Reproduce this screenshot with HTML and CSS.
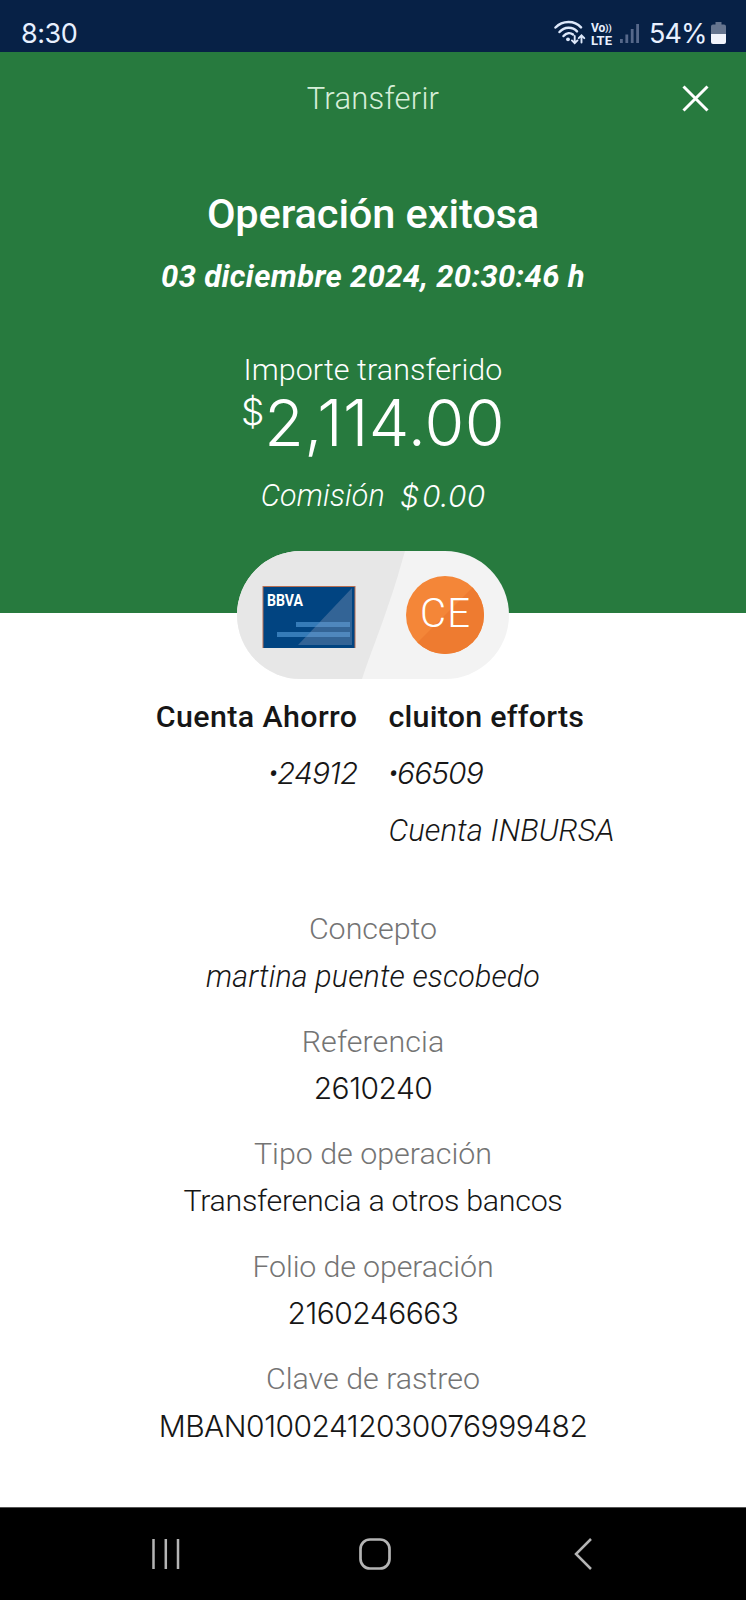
FILE: index.html
```html
<!DOCTYPE html>
<html lang="es">
<head>
<meta charset="utf-8">
<title>Transferir</title>
<link rel="stylesheet" href="styles.css">
</head>
<body>
<div class="screen">
  <div class="status">
    <span class="time">8:30</span>
    <div class="indicators">
      <svg class="wifi" width="32" height="26" viewBox="0 0 32 26" fill="none" stroke="#dde8fa" stroke-linecap="round">
        <path d="M1.500 7.500C8.500 .2 20.500 .2 27 7.300" stroke-width="2.500"/>
        <path d="M5.500 12C10.500 6.500 18.500 6.500 23 11.300" stroke-width="2.500"/>
        <path d="M9.500 16C12.500 12.600 16.500 12.600 19 14.500" stroke-width="2.500"/>
        <circle cx="14" cy="19.300" r="1.900" fill="#dde8fa" stroke="none"/>
        <path d="M20.700 16v7M17.900 20.400l2.800 2.800 2.800-2.800M27.500 22.500v-7M24.700 18.200l2.800-2.800 2.800 2.800" stroke-width="1.900"/>
      </svg>
      <span class="volte"><span class="vo">Vo<i>))</i></span><span class="lte">LTE</span></span>
      <svg class="signal" width="20" height="22" viewBox="0 0 20 22" fill="#56688a">
        <rect x="0" y="16" width="2.800" height="4"/><rect x="5.400" y="11.500" width="2.800" height="8.500"/><rect x="10.800" y="6" width="2.800" height="14"/><rect x="16.200" y="1" width="2.800" height="19"/>
      </svg>
      <span class="percent">54%</span>
      <svg class="battery" width="15" height="23" viewBox="0 0 15 23">
        <path d="M4.500 0h6v2.500H13q2 0 2 2V12H0V4.500q0-2 2-2h2.500z" fill="#66758f"/>
        <path d="M0 12h15v8q0 2-2 2H2q-2 0-2-2z" fill="#f1f4fc"/>
      </svg>
    </div>
  </div>

  <header class="hero">
    <div class="topbar">
      <h1 class="heading">Transferir</h1>
      <svg class="close" width="27" height="27" viewBox="0 0 27 27" fill="none" stroke="#fff" stroke-width="3"><path d="M1.500 1.500l24 24M25.500 1.500l-24 24"/></svg>
    </div>
    <h2 class="result">Operación exitosa</h2>
    <p class="date">03 diciembre 2024, 20:30:46 h</p>
    <p class="caption">Importe transferido</p>
    <p class="amount"><span class="currency">$</span><span>2,114.00</span></p>
    <p class="fee"><span>Comisión</span><span class="fee-value"><span class="fee-sign">$</span>0.00</span></p>
  </header>

  <div class="parties">
    <svg width="272" height="128" viewBox="0 0 272 128">
      <defs><clipPath id="pill"><rect width="272" height="128" rx="64"/></clipPath><clipPath id="disc"><circle cx="208" cy="64" r="39"/></clipPath></defs>
      <g clip-path="url(#pill)">
        <rect width="272" height="128" fill="#f3f3f3"/>
        <path d="M0 0H168C160 28 157 38 150 58C142 82 134 101 125 128H0z" fill="#e7e7e7"/>
      </g>
      <rect x="25.500" y="35" width="93" height="62" fill="#b86f52"/>
      <rect x="26.500" y="36" width="91" height="61" fill="#014481"/>
      <path d="M115 37V94H61z" fill="#336496"/>
      <path d="M59 71h54v5H59zM40 81h73v5H40z" fill="#357bb8"/>
      <path d="M113 71v5H78l5-5zM113 81v5H69l4.500-5z" fill="#4f87bd"/>
      <text class="card-brand" x="30" y="55" textLength="36" lengthAdjust="spacingAndGlyphs">BBVA</text>
      <g clip-path="url(#disc)"><rect x="169" y="25" width="78" height="78" fill="#f48638"/><path d="M240 32L180 92V103H247V32z" fill="#ee7b30"/></g>
      <text class="initials" x="183" y="76" textLength="50">CE</text>
    </svg>
  </div>

  <section class="accounts">
    <div class="origin"><strong class="origin-name">Cuenta Ahorro</strong><span class="number"><span class="bullet">•</span>24912</span></div>
    <div class="target"><strong class="target-name">cluiton efforts</strong><span class="number"><span class="bullet">•</span>66509</span><span class="bank">Cuenta INBURSA</span></div>
  </section>

  <dl class="details">
    <div class="item"><dt>Concepto</dt><dd class="slanted">martina puente escobedo</dd></div>
    <div class="item"><dt class="loose">Referencia</dt><dd class="digits">2610240</dd></div>
    <div class="item"><dt>Tipo de operación</dt><dd class="snug">Transferencia a otros bancos</dd></div>
    <div class="item"><dt class="folio">Folio de operación</dt><dd class="digits">2160246663</dd></div>
    <div class="item"><dt>Clave de rastreo</dt><dd class="digits">MBAN01002412030076999482</dd></div>
  </dl>

  <nav class="navbar">
    <svg width="32" height="32" viewBox="0 0 32 32" stroke="#b4b4b4" stroke-width="2.500"><path d="M3.500 1v30M15.800 1v30M28 1v30"/></svg>
    <svg width="32" height="32" viewBox="0 0 32 32" fill="none" stroke="#b4b4b4" stroke-width="2.700"><rect x="1.500" y="1.500" width="29" height="29" rx="9.500"/></svg>
    <svg width="32" height="32" viewBox="0 0 32 32" fill="none" stroke="#b4b4b4" stroke-width="2.500"><path d="M24 1L9 16l15 15"/></svg>
  </nav>
</div>
</body>
</html>
```

FILE: styles.css
```css
* { box-sizing: border-box; margin: 0; padding: 0; }
body { background: #fff; color: #161616; font-family: Roboto, "Open Sans", sans-serif; font-size: 30.4px; font-weight: 300; white-space: nowrap; }
.screen { width: 746px; height: 1600px; display: flex; flex-direction: column; overflow: hidden; }

.status { height: 52px; flex: none; background: #072146; color: #e8f0ff; display: flex; justify-content: space-between; padding: 14px 20px 0 21px; }
.time, .percent { font-family: Inter, sans-serif; font-size: 27px; font-weight: 400; line-height: 40px; }
.time { letter-spacing: -.5px; }
.indicators { display: flex; align-items: flex-start; }
.wifi { margin-top: 6px; }
.volte { width: 24px; margin: 9px 0 0 5px; font: 700 12px/11px Roboto, sans-serif; display: flex; flex-direction: column; }
.vo i { font-style: normal; font-size: 9px; vertical-align: 1px; }
.lte { font-size: 13px; line-height: 13px; }
.signal { margin: 9px 0 0 5px; }
.percent { width: 57px; margin-left: 9px; letter-spacing: -.9px; }
.battery { margin: 8px 0 0 5px; }

.hero { height: 561px; flex: none; background: #277a3e; color: #fff; text-align: center; }
.topbar { height: 93px; display: grid; grid-template-columns: 1fr auto 1fr; align-items: center; padding: 0 37px; }
.heading { grid-column: 2; font-size: 31px; font-weight: 300; color: #d6eed9; letter-spacing: .2px; }
.close { justify-self: end; }
.result { margin-top: 44px; font-size: 41.500px; font-weight: 500; line-height: 50px; letter-spacing: -.1px; }
.date { margin-top: 15px; font-size: 31px; font-style: italic; font-weight: 700; line-height: 46px; letter-spacing: .35px; }
.caption { margin-top: 52px; line-height: 36px; letter-spacing: .1px; }
.amount { display: flex; justify-content: center; font-family: Inter, sans-serif; font-size: 64.500px; line-height: 71px; letter-spacing: .4px; }
.currency { font-size: 37px; line-height: 48px; letter-spacing: 0; }
.fee { display: flex; justify-content: center; gap: 15px; margin-top: 14px; font-style: italic; line-height: 46px; letter-spacing: .2px; }
.fee-value { font-family: Inter, sans-serif; font-size: 30px; letter-spacing: .2px; }
.fee-sign { margin-right: 3px; }

.parties { display: flex; justify-content: center; margin-top: -62px; height: 128px; flex: none; }
.card-brand { font: 700 17px Roboto, sans-serif; fill: #fff; }
.initials { font: 300 40px Roboto, sans-serif; fill: #fff; }

.accounts { display: grid; grid-template-columns: 1fr 1fr; gap: 31px; padding-top: 10px; height: 227px; flex: none; line-height: 56.500px; font-style: italic; }
.origin, .target { display: flex; flex-direction: column; }
.origin { align-items: flex-end; }
.accounts strong { font-weight: 500; font-style: normal; }
.origin-name { letter-spacing: .4px; }
.target-name { letter-spacing: .25px; }
.number { height: 56.500px; font-family: Inter, sans-serif; font-size: 30px; line-height: 55px; letter-spacing: -.9px; }
.bullet { font-family: Roboto, sans-serif; }
.bank { font-size: 31px; line-height: 57.500px; letter-spacing: .1px; }

.details { flex: 1; display: flex; flex-direction: column; gap: 19.600px; text-align: center; }
.item { line-height: 46.500px; }
dt { color: #747474; }
.loose { letter-spacing: .1px; }
.slanted { padding-top: 1px; margin-bottom: -1px; font-style: italic; letter-spacing: .15px; }
.snug { letter-spacing: -.3px; }
.folio { letter-spacing: -.15px; }
.digits { font-family: Inter, sans-serif; font-size: 30px; letter-spacing: -.5px; }

.navbar { height: 93px; flex: none; background: #000; border-top: 1px solid #555; display: flex; justify-content: space-between; align-items: center; padding: 0 147px 0 150px; }
```
